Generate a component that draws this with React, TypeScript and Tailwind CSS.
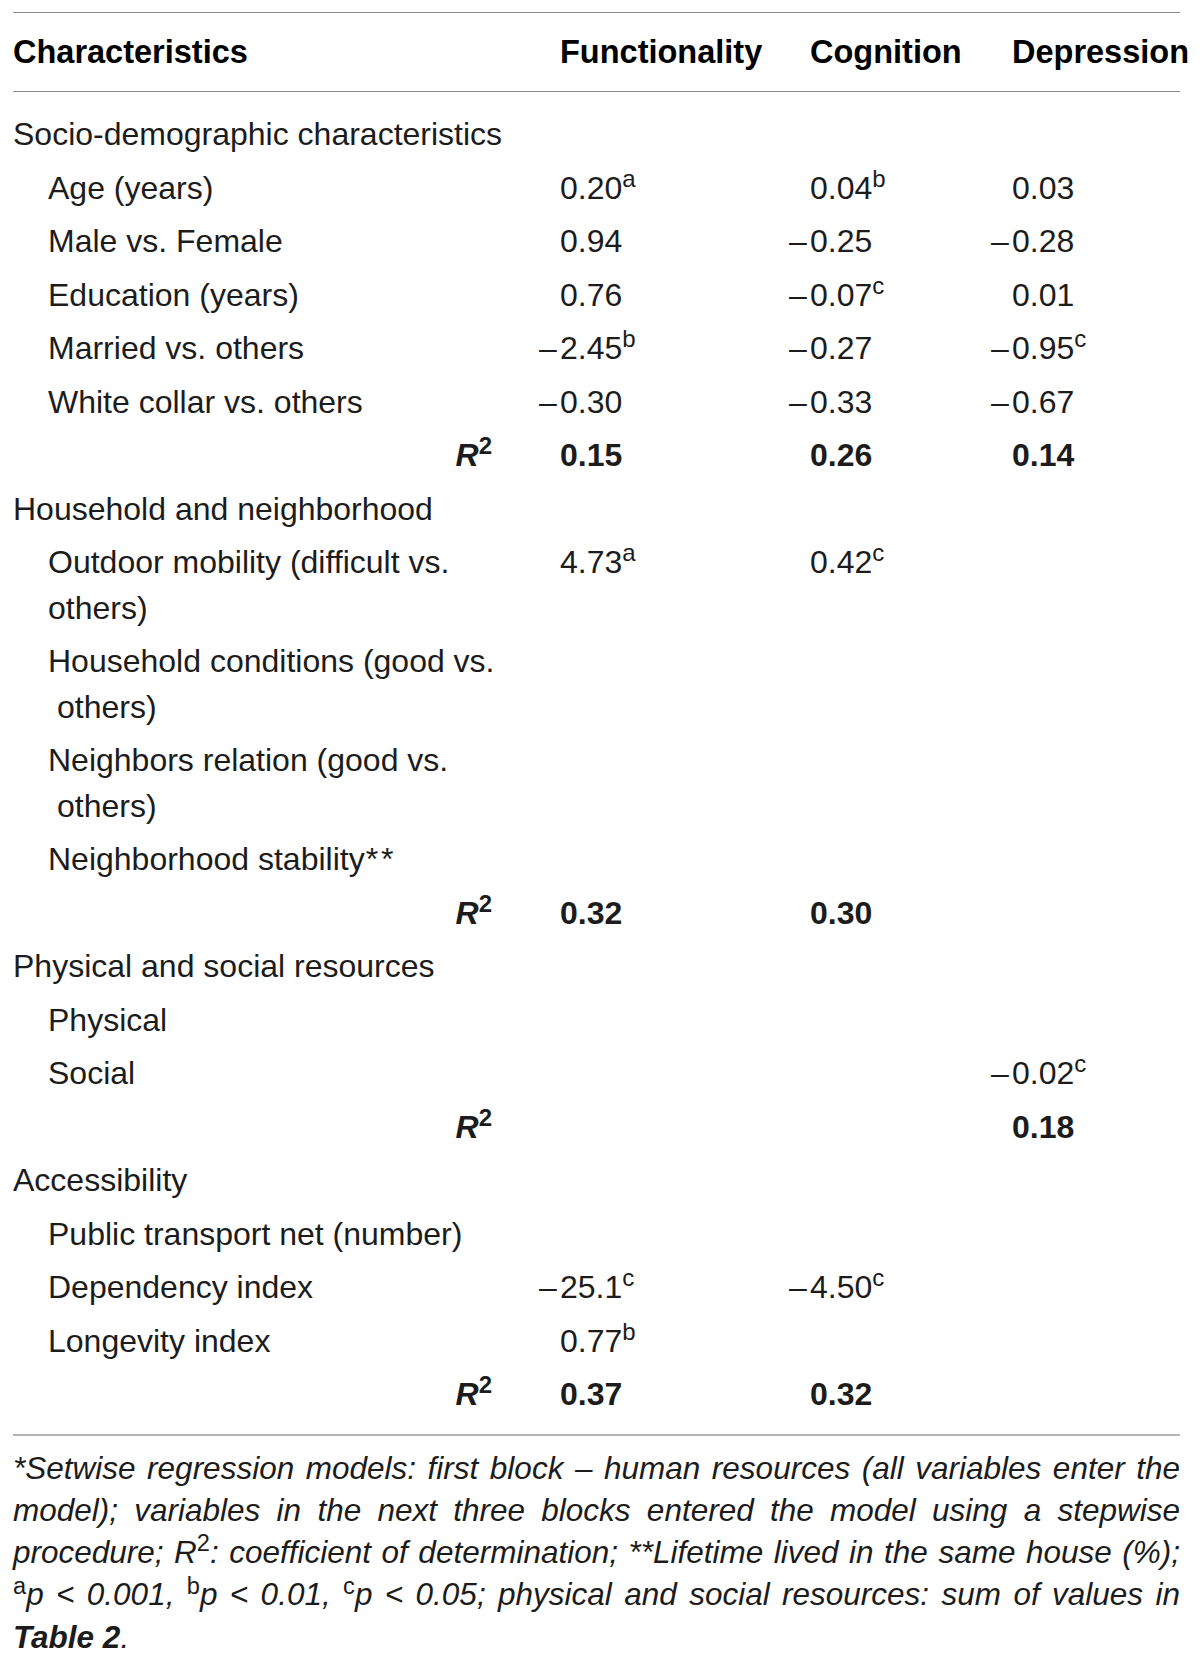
type Val = { v: string; sup?: string; bold?: boolean }

type Row =
  | { kind: "section"; label: string }
  | { kind: "item"; label: string; cont?: string; contIndent?: boolean; vals: (Val | null)[] }
  | { kind: "r2"; vals: (Val | null)[] }

const v = (s: string, sup?: string): Val => ({ v: s, sup })
const b = (s: string): Val => ({ v: s, bold: true })

const rows: Row[] = [
  { kind: "section", label: "Socio-demographic characteristics" },
  { kind: "item", label: "Age (years)", vals: [v("0.20", "a"), v("0.04", "b"), v("0.03")] },
  { kind: "item", label: "Male vs. Female", vals: [v("0.94"), v("–0.25"), v("–0.28")] },
  { kind: "item", label: "Education (years)", vals: [v("0.76"), v("–0.07", "c"), v("0.01")] },
  { kind: "item", label: "Married vs. others", vals: [v("–2.45", "b"), v("–0.27"), v("–0.95", "c")] },
  { kind: "item", label: "White collar vs. others", vals: [v("–0.30"), v("–0.33"), v("–0.67")] },
  { kind: "r2", vals: [b("0.15"), b("0.26"), b("0.14")] },
  { kind: "section", label: "Household and neighborhood" },
  {
    kind: "item",
    label: "Outdoor mobility (difficult vs.",
    cont: "others)",
    vals: [v("4.73", "a"), v("0.42", "c"), null],
  },
  { kind: "item", label: "Household conditions (good vs.", cont: "others)", contIndent: true, vals: [] },
  { kind: "item", label: "Neighbors relation (good vs.", cont: "others)", contIndent: true, vals: [] },
  { kind: "item", label: "Neighborhood stability", vals: [] },
  { kind: "r2", vals: [b("0.32"), b("0.30"), null] },
  { kind: "section", label: "Physical and social resources" },
  { kind: "item", label: "Physical", vals: [] },
  { kind: "item", label: "Social", vals: [null, null, v("–0.02", "c")] },
  { kind: "r2", vals: [null, null, b("0.18")] },
  { kind: "section", label: "Accessibility" },
  { kind: "item", label: "Public transport net (number)", vals: [] },
  { kind: "item", label: "Dependency index", vals: [v("–25.1", "c"), v("–4.50", "c"), null] },
  { kind: "item", label: "Longevity index", vals: [v("0.77", "b"), null, null] },
  { kind: "r2", vals: [b("0.37"), b("0.32"), null] },
]

function Cell({ val }: { val: Val | null | undefined }) {
  if (!val) return <div />
  const neg = val.v.startsWith("–")
  const digits = neg ? val.v.slice(1) : val.v
  return (
    <div className={val.bold ? "font-bold" : ""}>
      {neg && <span className="-ml-[21px] inline-block w-[21px]">–</span>}
      {digits}
      {val.sup && <sup>{val.sup}</sup>}
    </div>
  )
}

function R2() {
  return (
    <span className="font-bold italic">
      R<sup className="not-italic">2</sup>
    </span>
  )
}

export default function App() {
  return (
    <div className="min-h-[1660px] w-[1200px] bg-white px-[13px] pt-[12px] font-['Liberation_Sans',Arial,sans-serif] text-[#1c1c1c]">
      <div className="w-[1167px]">
        {/* header */}
        <div className="grid h-[80px] grid-cols-[547px_250px_202px_168px] items-center border-y border-[#8a8a8a] text-[32.5px] font-bold text-black">
          <div>Characteristics</div>
          <div>Functionality</div>
          <div>Cognition</div>
          <div className="whitespace-nowrap">Depression</div>
        </div>

        {/* body */}
        <div className="border-b-2 border-[#b5b5b5] pt-[16px] pb-[12px] text-[32px]">
          {rows.map((r, i) => {
            if (r.kind === "section") {
              return (
                <div key={i} className="py-1 leading-[45.5px] whitespace-nowrap">
                  {r.label}
                </div>
              )
            }
            if (r.kind === "r2") {
              return (
                <div key={i} className="grid grid-cols-[547px_250px_202px_168px] py-1 leading-[45.5px]">
                  <div className="pr-[68px] text-right">
                    <R2 />
                  </div>
                  {r.vals.map((x, j) => (
                    <Cell key={j} val={x} />
                  ))}
                </div>
              )
            }
            return (
              <div key={i} className="grid grid-cols-[547px_250px_202px_168px] py-1 leading-[45.5px]">
                <div className="pl-[35px] whitespace-nowrap">
                  {r.label}
                  {r.label === "Neighborhood stability" && (
                    <span className="ml-[1px] tracking-[3px]">**</span>
                  )}
                  {r.cont && (
                    <>
                      <br />
                      <span className={r.contIndent ? "pl-[9px]" : ""}>{r.cont}</span>
                    </>
                  )}
                </div>
                {[0, 1, 2].map((j) => (
                  <Cell key={j} val={r.vals[j]} />
                ))}
              </div>
            )
          })}
        </div>

        {/* footnote */}
        <div className="pt-[11px] text-[31.5px] leading-[42.3px] italic">
          <div className="text-justify [text-align-last:justify]">
            *Setwise regression models: first block – human resources (all variables enter the
          </div>
          <div className="text-justify [text-align-last:justify]">
            model); variables in the next three blocks entered the model using a stepwise
          </div>
          <div className="text-justify [text-align-last:justify]">
            procedure; R<sup className="not-italic">2</sup>: coefficient of determination; **Lifetime lived in the same house (%);
          </div>
          <div className="text-justify [text-align-last:justify]">
            <sup className="not-italic">a</sup>p &lt; 0.001, <sup className="not-italic">b</sup>p &lt; 0.01,{" "}
            <sup className="not-italic">c</sup>p &lt; 0.05; physical and social resources: sum of values in
          </div>
          <div>
            <span className="font-bold">Table 2</span>.
          </div>
        </div>
      </div>
    </div>
  )
}
